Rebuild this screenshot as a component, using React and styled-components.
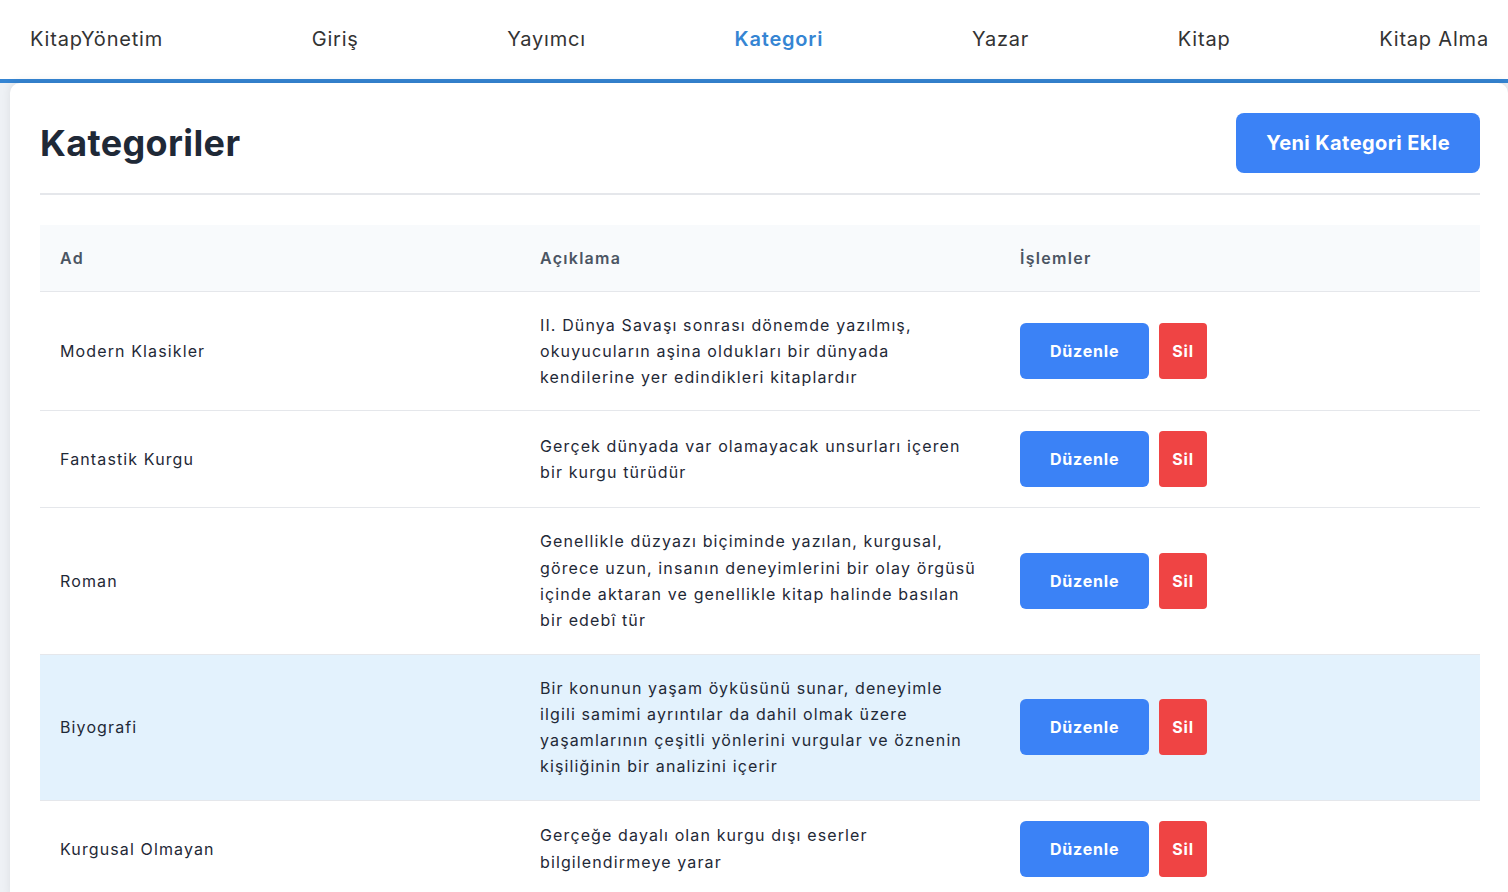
import React from 'react';
import styled, { createGlobalStyle } from 'styled-components';

const GlobalStyle = createGlobalStyle`
  * {
    box-sizing: border-box;
  }

  body {
    margin: 0;
    background-color: #eef1f5;
    font-family: 'Inter', 'Noto Sans', sans-serif;
    color: #1f2937;
  }
`;

const Navbar = styled.nav`
  display: flex;
  align-items: center;
  justify-content: space-between;
  height: 83px;
  padding: 2px 19px 4px 30px;
  background-color: #ffffff;
  border-bottom: 4px solid #3585d3;
`;

const NavItem = styled.a`
  font-size: 20px;
  letter-spacing: 0.04em;
  font-weight: ${(p) => (p.$active ? 600 : 400)};
  color: ${(p) => (p.$active ? '#3585d3' : '#333333')};
  text-decoration: none;
  cursor: pointer;
`;

const Main = styled.main`
  padding-left: 10px;
`;

const Card = styled.section`
  background-color: #ffffff;
  border-radius: 10px 10px 0 0;
  box-shadow: 0 -2px 10px rgba(0, 0, 0, 0.08);
  padding: 30px 28px 0 30px;
  min-height: 809px;
`;

const Header = styled.div`
  display: flex;
  align-items: center;
  justify-content: space-between;
  padding-bottom: 20px;
  border-bottom: 2px solid #e5e7eb;
  margin-bottom: 30px;
`;

const Title = styled.h1`
  margin: 0;
  font-size: 36px;
  font-weight: 700;
  letter-spacing: 0.01em;
  color: #1f2937;
`;

const AddButton = styled.button`
  height: 60px;
  padding: 0 30px;
  border: none;
  border-radius: 8px;
  background-color: #3b82f6;
  color: #ffffff;
  font-family: inherit;
  font-size: 20px;
  font-weight: 700;
  letter-spacing: 0.02em;
  cursor: pointer;
`;

const Table = styled.table`
  width: 100%;
  border-collapse: collapse;
  table-layout: fixed;
`;

const HeadCell = styled.th`
  text-align: left;
  padding: 20px;
  height: 66px;
  background-color: #f8fafc;
  border-bottom: 1px solid #e5e7eb;
  font-size: 16px;
  font-weight: 600;
  letter-spacing: 0.08em;
  color: #4b5563;
`;

const Row = styled.tr`
  background-color: ${(p) => (p.$highlight ? '#e3f2fd' : '#ffffff')};
`;

const Cell = styled.td`
  padding: 20px;
  border-bottom: 1px solid #e5e7eb;
  font-size: 16px;
  line-height: 26.3px;
  letter-spacing: 0.07em;
  color: #1f2937;
  vertical-align: middle;
`;

const Actions = styled.div`
  display: flex;
  gap: 10px;
`;

const ActionButton = styled.button`
  height: 56px;
  padding: 0 ${(p) => (p.$danger ? '13px' : '30px')};
  border: none;
  border-radius: ${(p) => (p.$danger ? '4px' : '6px')};
  background-color: ${(p) => (p.$danger ? '#ef4444' : '#3b82f6')};
  color: #ffffff;
  font-family: inherit;
  font-size: 16px;
  font-weight: 700;
  letter-spacing: 0.05em;
  cursor: pointer;
`;

const navItems = ['KitapYönetim', 'Giriş', 'Yayımcı', 'Kategori', 'Yazar', 'Kitap', 'Kitap Alma'];

const categories = [
  {
    name: 'Modern Klasikler',
    lines: [
      'II. Dünya Savaşı sonrası dönemde yazılmış,',
      'okuyucuların aşina oldukları bir dünyada',
      'kendilerine yer edindikleri kitaplardır',
    ],
  },
  {
    name: 'Fantastik Kurgu',
    lines: ['Gerçek dünyada var olamayacak unsurları içeren', 'bir kurgu türüdür'],
  },
  {
    name: 'Roman',
    lines: [
      'Genellikle düzyazı biçiminde yazılan, kurgusal,',
      'görece uzun, insanın deneyimlerini bir olay örgüsü',
      'içinde aktaran ve genellikle kitap halinde basılan',
      'bir edebî tür',
    ],
  },
  {
    name: 'Biyografi',
    highlight: true,
    lines: [
      'Bir konunun yaşam öyküsünü sunar, deneyimle',
      'ilgili samimi ayrıntılar da dahil olmak üzere',
      'yaşamlarının çeşitli yönlerini vurgular ve öznenin',
      'kişiliğinin bir analizini içerir',
    ],
  },
  {
    name: 'Kurgusal Olmayan',
    lines: ['Gerçeğe dayalı olan kurgu dışı eserler', 'bilgilendirmeye yarar'],
  },
];

const App = () => {
  return (
    <>
      <GlobalStyle />
      <Navbar>
        {navItems.map((item) => (
          <NavItem key={item} $active={item === 'Kategori'}>
            {item}
          </NavItem>
        ))}
      </Navbar>
      <Main>
        <Card>
          <Header>
            <Title>Kategoriler</Title>
            <AddButton>Yeni Kategori Ekle</AddButton>
          </Header>
          <Table>
            <thead>
              <tr>
                <HeadCell>Ad</HeadCell>
                <HeadCell>Açıklama</HeadCell>
                <HeadCell>İşlemler</HeadCell>
              </tr>
            </thead>
            <tbody>
              {categories.map((cat) => (
                <Row key={cat.name} $highlight={cat.highlight}>
                  <Cell>{cat.name}</Cell>
                  <Cell>
                    {cat.lines.map((line, i) => (
                      <React.Fragment key={i}>
                        {i > 0 && <br />}
                        {line}
                      </React.Fragment>
                    ))}
                  </Cell>
                  <Cell>
                    <Actions>
                      <ActionButton>Düzenle</ActionButton>
                      <ActionButton $danger>Sil</ActionButton>
                    </Actions>
                  </Cell>
                </Row>
              ))}
            </tbody>
          </Table>
        </Card>
      </Main>
    </>
  );
};

export default App;
